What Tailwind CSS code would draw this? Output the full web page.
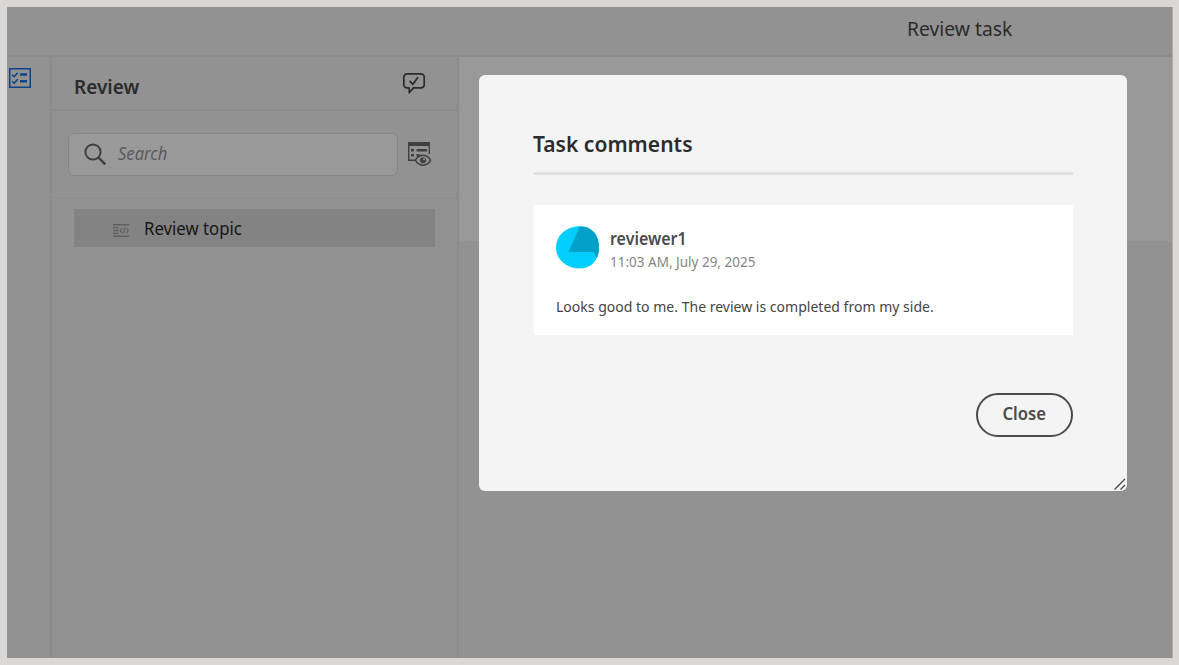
<!DOCTYPE html>
<html lang="en">
<head>
<meta charset="utf-8">
<title>Review task</title>
<script src="https://cdn.jsdelivr.net/npm/@tailwindcss/browser@4"></script>
</head>
<body class="h-screen overflow-hidden bg-[#dbd7d4] p-[7px] pr-1.5 font-['Noto_Sans',sans-serif]">
<div class="flex h-[651px] flex-col border-r border-[#b0afae] bg-[#929292]">
  <header class="flex h-[50px] shrink-0 border-b-2 border-[#8b8b8b] pl-[900px] pt-1.5">
    <h1 class="origin-left scale-x-[0.965] whitespace-nowrap text-[20px] leading-8 text-[#2b2b2b]">Review task</h1>
  </header>
  <div class="flex grow">
    <nav class="w-[45px] shrink-0 border-r-2 border-[#8b8b8b] pl-0.5 pt-[11px]">
      <svg class="h-5 w-[22px]" viewBox="0 0 22 20" fill="none" stroke="#0d4389"><rect x=".75" y=".75" width="20.5" height="18.5" stroke-width="1.5"/><path d="M3.2 6.700l2 2 3.500-4M3.200 13.200l2 2 3.500-4" stroke-width="1.600"/><path d="M11 6.500h7M11 13.200h7" stroke-width="2.600"/></svg>
    </nav>
    <aside class="w-[407px] shrink-0 border-r-2 border-[#8b8b8b]">
      <div class="flex h-[54px] justify-between border-b-2 border-[#8b8b8b] pl-[21.500px] pr-[31px]">
        <h2 class="origin-left scale-x-[0.95] pt-3.5 text-[20px] font-semibold leading-8 text-[#2b2b2b]">Review</h2>
        <svg class="mt-[15px] h-[23px] w-6" viewBox="0 0 24 23" fill="none" stroke="#2b2b2b" stroke-width="1.700" stroke-linejoin="round" stroke-linecap="round"><path d="M5 1.900h14a3.200 3.200 0 0 1 3.200 3.200v7.600a3.200 3.200 0 0 1-3.200 3.200h-7.500L7.200 20.800v-4.900H5a3.200 3.200 0 0 1-3.200-3.200V5.100A3.200 3.200 0 0 1 5 1.900z"/><path d="M8 9.300l2.900 3 4.700-6.600"/></svg>
      </div>
      <div class="flex h-[87px] border-b border-[#8b8b8b] pl-4 pt-[22px]">
        <div class="flex h-[43px] w-[330px] items-center rounded-md border border-[#868686] bg-[#999] pl-[15px]">
          <svg class="h-[23px] w-[23px]" viewBox="0 0 23 23" fill="none" stroke="#3f3f3f" stroke-width="2"><circle cx="9" cy="9" r="7.600"/><path d="M14.500 14.500L21.200 21.400" stroke-width="2.400"/></svg>
          <span class="mb-[3px] ml-[11px] origin-left scale-x-[0.92] text-[18px] italic leading-6 text-[#5b5b5b]">Search</span>
        </div>
        <svg class="ml-2.5 mt-[9px] h-[25px] w-6" viewBox="0 0 24 25" fill="none" stroke="#3f3f3f"><path d="M0 0h22v4H0z" fill="#3f3f3f" stroke="none"/><path d="M.7 3v15.300H7M21.300 3v9" stroke-width="1.400"/><path d="M3 8.200h3M8.500 8.200H19M3 13.300h3M8.500 13.300h3" stroke-width="2.400"/><path d="M7.300 18.200c2-3.400 4.700-5 7.700-5s5.700 1.600 7.600 5c-1.900 3.400-4.600 5-7.600 5s-5.700-1.600-7.700-5z" fill="#929292" stroke-width="1.500"/><circle cx="15" cy="18.200" r="3" fill="#3f3f3f" stroke="none"/><circle cx="16" cy="17.200" r="1" fill="#929292" stroke="none"/></svg>
      </div>
      <div class="ml-[22px] mt-[11px] flex h-[38px] w-[361px] items-center bg-[#838383] pl-[39px]">
        <svg class="mt-1 h-[13px] w-4" viewBox="0 0 16 13" fill="none" stroke="#5f5f5f"><path d="M0 .700h16M0 12.300h16" stroke-width="1.500"/><path d="M0 3.700h5.500M0 6.500h5.500M0 9.300h5.500" stroke-width="1.300"/><path d="M9 4.200L7.300 6.500 9 8.800M13.500 4.200l1.700 2.300-1.700 2.300M12 3.700l-1.500 5.600" stroke-width="1.200"/></svg>
        <span class="ml-[15px] origin-left scale-x-[0.93] whitespace-nowrap text-[18px] leading-6 text-[#151515]">Review topic</span>
      </div>
    </aside>
    <main class="grow">
      <div class="h-[184px] bg-[#999]"></div>
    </main>
  </div>
</div>

<section class="absolute left-[479px] top-[75px] h-[416px] w-[648px] rounded-md bg-[#f4f4f4] px-[54px] pt-[50px]" role="dialog">
  <h2 class="h-12 origin-left scale-x-[0.957] whitespace-nowrap text-[22px] font-semibold leading-[36px] text-[#2c2c2c]">Task comments</h2>
  <div class="-mt-px h-[3px] bg-[#e1e1e1]"></div>
  <div class="ml-px mt-[30px] h-[130px] bg-white pl-[22px] pt-[21px]">
    <div class="flex">
      <svg class="h-[43px] w-[43px]" viewBox="0 0 43 43"><defs><clipPath id="avatar"><path d="M23.500.200C36 .200 43 9 43 21.500c0 13-8 21-19.500 21C11 42.500 0 34 0 21.500 0 9 11 .200 23.500.200z"/></clipPath></defs><g clip-path="url(#avatar)"><path d="M0 0h43v43H0z" fill="#00ceff"/><path d="M24 0L12.500 26H37.500l3 6H43V0z" fill="#00a0c8"/></g></svg>
      <div class="ml-[11px] flex flex-col pt-px">
        <span class="origin-left scale-x-[0.94] whitespace-nowrap text-[17px] font-semibold leading-6 text-[#4b4b4b]">reviewer1</span>
        <span class="-mt-px origin-left scale-x-[0.9] whitespace-nowrap text-[15px] leading-[22px] text-[#868686]">11:03 AM, July 29, 2025</span>
      </div>
    </div>
    <p class="mt-[22px] origin-left scale-x-[0.935] whitespace-nowrap text-[15px] leading-6 text-[#444]">Looks good to me. The review is completed from my side.</p>
  </div>
  <div class="mt-[58px] flex justify-end">
    <button class="h-11 w-[97px] rounded-full border-2 border-[#4b4b4b] pb-0.5 text-[17px] font-semibold text-[#4b4b4b]"><span class="inline-block scale-x-[0.98]">Close</span></button>
  </div>
  <svg class="absolute bottom-0 right-0 h-3.5 w-3.5" viewBox="0 0 14 14" fill="none" stroke="#4b4b4b" stroke-width="1.400"><path d="M1.500 12.500L12 2M7.500 12.500L12 8"/></svg>
</section>
</body>
</html>
